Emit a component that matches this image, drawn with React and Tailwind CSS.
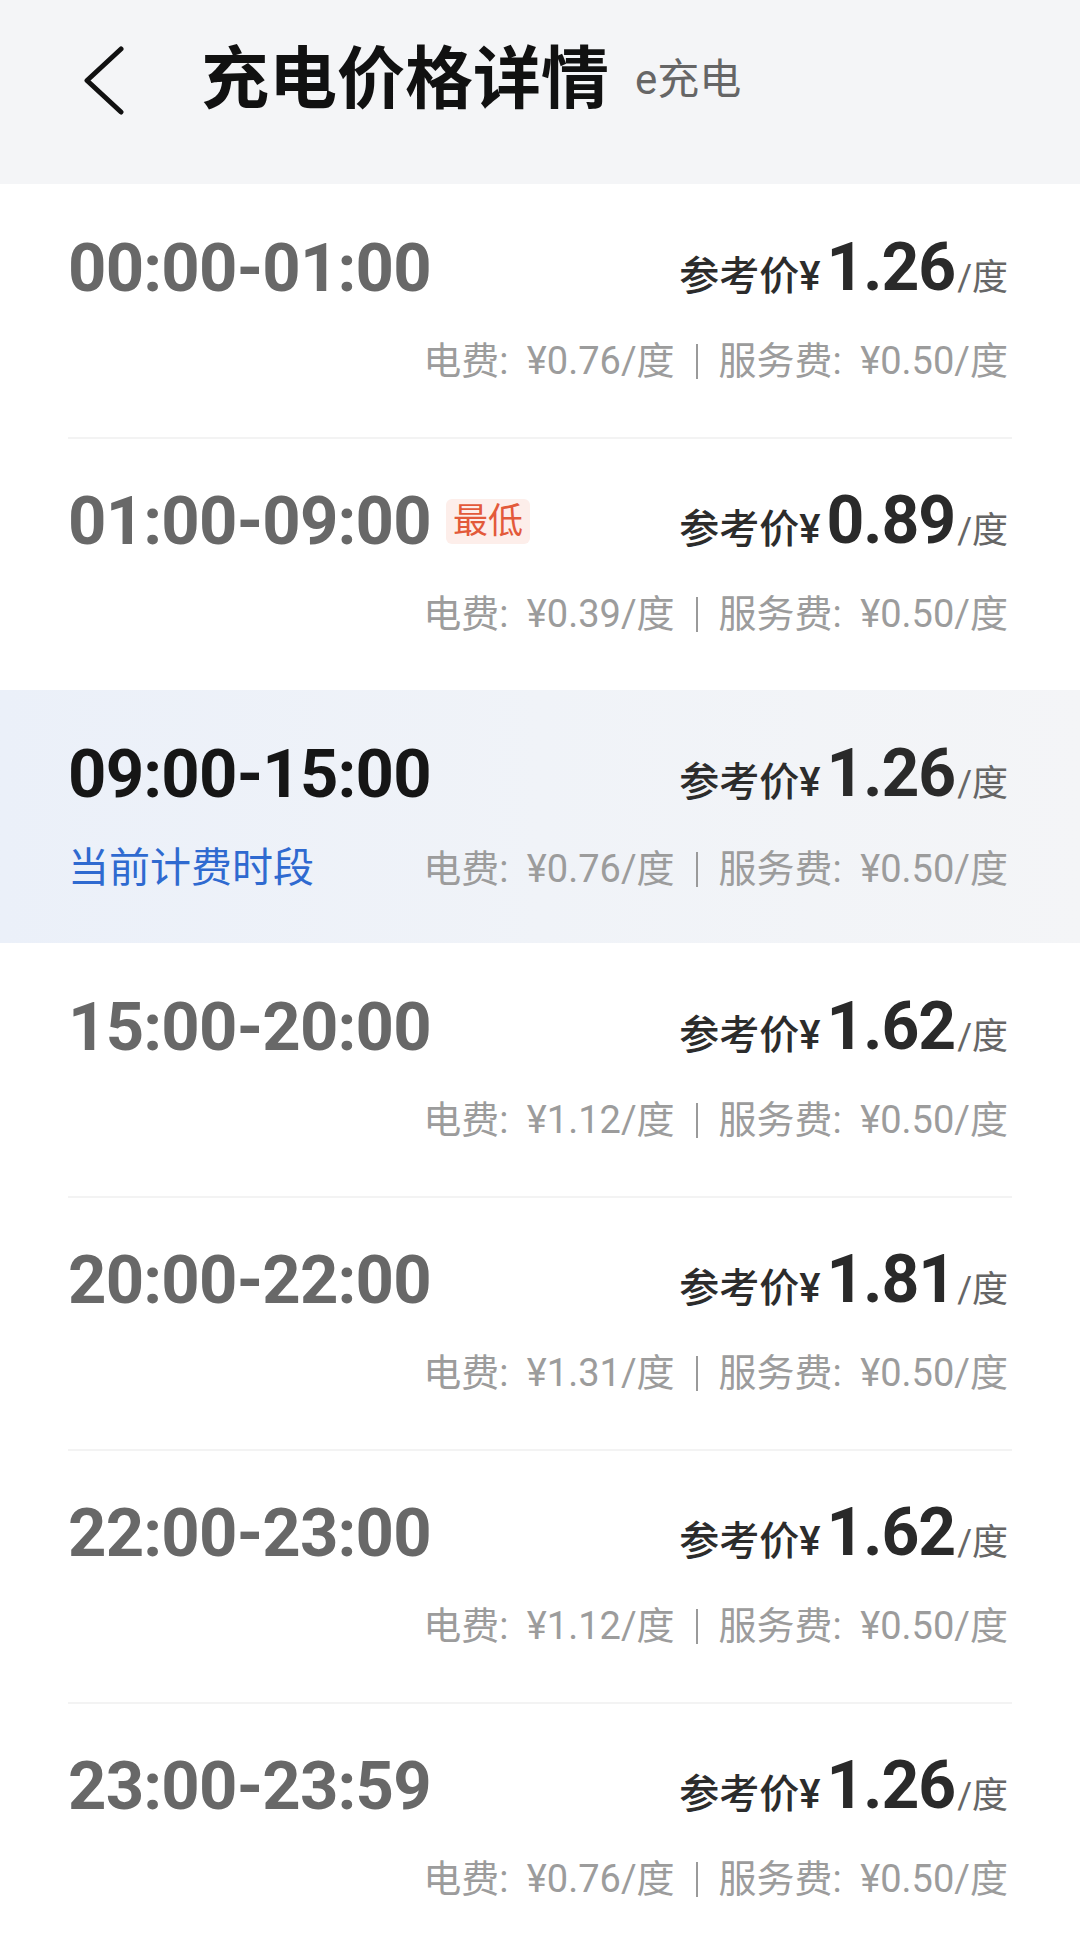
import React from "react";

const rows = [
  { time: "00:00-01:00", price: "1.26", elec: "0.76", svc: "0.50" },
  { time: "01:00-09:00", price: "0.89", elec: "0.39", svc: "0.50", lowest: true },
  { time: "09:00-15:00", price: "1.26", elec: "0.76", svc: "0.50", current: true },
  { time: "15:00-20:00", price: "1.62", elec: "1.12", svc: "0.50" },
  { time: "20:00-22:00", price: "1.81", elec: "1.31", svc: "0.50" },
  { time: "22:00-23:00", price: "1.62", elec: "1.12", svc: "0.50" },
  { time: "23:00-23:59", price: "1.26", elec: "0.76", svc: "0.50" },
];

function Row({ r, divider }) {
  return (
    <div
      className={
        "h-[253px] px-[68px] " +
        (r.current ? "bg-linear-to-r from-[#ebf0f9] via-[#f0f3f8] to-[#f4f5f7]" : "bg-white")
      }
    >
      <div
        className={
          "h-full pt-[48px] pr-[4px] " +
          (divider ? "border-t-2 border-[#f3f3f3]" : "border-t-2 border-transparent")
        }
      >
        <div className="flex items-center justify-between h-[68px]">
          <div className="flex items-center">
            <span
              className={
                "font-[Roboto,sans-serif] font-bold text-[67px] leading-[68px] tracking-[-0.8px] " +
                (r.current ? "text-[#161616]" : "text-[#686868]")
              }
            >
              {r.time}
            </span>
            {r.lowest && (
              <span className="ml-[15px] h-[45px] px-[7px] rounded-[6px] bg-[#fdeeea] text-[#e35a3a] text-[35px] leading-[45px]">
                最低
              </span>
            )}
          </div>
          <div className="flex items-baseline">
            <span className="text-[40px] font-medium text-[#2c2c2c] leading-[40px]">参考价¥</span>
            <span className="ml-[6px] font-[Roboto,sans-serif] font-bold text-[66px] leading-[66px] tracking-[-1px] text-[#2a2a2a]">
              {r.price}
            </span>
            <span className="ml-[2px] text-[36px] text-[#666666] leading-[36px]">/度</span>
          </div>
        </div>
        <div className="mt-[40px] flex items-baseline justify-between">
          <span className="text-[41px] leading-[40px] text-[#2f6ad0]">
            {r.current ? "当前计费时段" : ""}
          </span>
          <span className="text-[38px] leading-[38px] text-[#9c9c9c] [word-spacing:9px] whitespace-nowrap">
            电费: ¥{r.elec}/度
            <span className="inline-block w-[2px] h-[35px] bg-[#9a9a9a] mx-[21px] align-[-5px]"></span>
            服务费: ¥{r.svc}/度
          </span>
        </div>
      </div>
    </div>
  );
}

export default function App() {
  return (
    <div className="w-[1080px] min-h-[1946px] bg-white font-[Roboto,'Noto_Sans_CJK_SC',sans-serif]">
      <div className="h-[184px] bg-[#f4f5f7]">
        <div className="h-[160px] flex items-center">
          <svg
            className="ml-[82px]"
            width="44"
            height="69"
            viewBox="0 0 44 69"
            fill="none"
          >
            <path
              d="M39 3 L5 34.5 L39 66"
              stroke="#111111"
              strokeWidth="5"
              strokeLinecap="round"
              strokeLinejoin="round"
            />
          </svg>
          <span className="ml-[75px] text-[68px] leading-[68px] font-bold text-[#111111]">
            充电价格详情
          </span>
          <span className="ml-[26px] text-[42px] leading-[42px] text-[#666666]">e充电</span>
        </div>
      </div>
      {rows.map((r, i) => (
        <Row key={i} r={r} divider={i > 0 && !r.current && !rows[i - 1].current} />
      ))}
    </div>
  );
}
